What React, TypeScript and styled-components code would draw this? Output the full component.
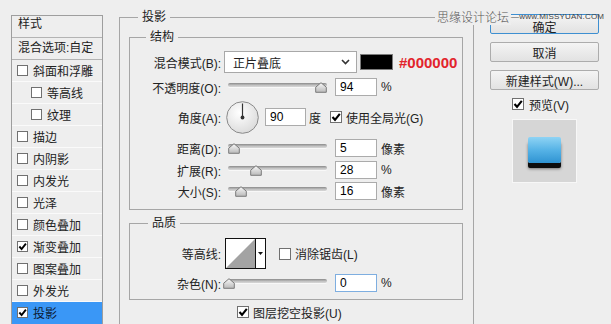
import styled, { createGlobalStyle } from "styled-components";

const GlobalStyle = createGlobalStyle`
  html, body {
    margin: 0;
    padding: 0;
  }
  body {
    background: #eeeeee;
    font-family: "Liberation Sans", "Noto Sans CJK SC", sans-serif;
    font-size: 12px;
    color: #222;
  }
`;

const Page = styled.div`
  position: relative;
  width: 611px;
  height: 324px;
  overflow: hidden;
  display: flex;
  align-items: flex-start;
`;

/* ---------- left: style list ---------- */

const StylePanel = styled.div`
  margin: 15px 0 0 11px;
  width: 92px;
  flex-shrink: 0;
  box-sizing: border-box;
  border: 1px solid #9e9e9e;
  border-bottom: none;
`;

const PanelHead = styled.div<{ $top?: boolean }>`
  height: 22px;
  box-sizing: border-box;
  padding-left: 6px;
  border-bottom: 1px solid #b3b3b3;
  line-height: ${(p) => (p.$top ? "16px" : "21px")};
  white-space: nowrap;
`;

const EffectRow = styled.div<{ $indent?: boolean; $active?: boolean }>`
  height: 22px;
  box-sizing: border-box;
  display: flex;
  align-items: center;
  gap: 5px;
  padding-left: ${(p) => (p.$indent ? 19 : 5)}px;
  border-bottom: 1px solid ${(p) => (p.$active ? "#3a97f6" : "#fafafa")};
  background: ${(p) => (p.$active ? "#3a97f6" : "transparent")};
  color: ${(p) => (p.$active ? "#0d1a33" : "#222")};
  white-space: nowrap;
`;

/* ---------- checkbox ---------- */

const Box = styled.span<{ $size: number }>`
  width: ${(p) => p.$size}px;
  height: ${(p) => p.$size}px;
  box-sizing: border-box;
  flex-shrink: 0;
  border: 1px solid #707070;
  background: #fff;
  display: inline-flex;
  align-items: center;
  justify-content: center;
`;

function CheckBox({ checked, size = 11 }: { checked?: boolean; size?: number }) {
  return (
    <Box $size={size}>
      {checked && (
        <svg width={size - 2} height={size - 2} viewBox="0 0 10 10">
          <path d="M1.5 5 L4 7.8 L8.8 1.8" stroke="#000" strokeWidth="2.1" fill="none" />
        </svg>
      )}
    </Box>
  );
}

/* ---------- centre: group boxes ---------- */

const Group = styled.fieldset`
  margin: 0;
  min-width: 0;
  box-sizing: border-box;
  border: 1px solid #a6a6a6;
`;

const OuterGroup = styled(Group)`
  margin: 9px 0 0 16px;
  width: 355px;
  height: 340px;
  flex-shrink: 0;
  padding: 0 10px 0 9px;
`;

const InnerGroup = styled(Group)<{ $mt: number; $pt: number; $pb: number }>`
  margin-top: ${(p) => p.$mt}px;
  padding: ${(p) => p.$pt}px 0 ${(p) => p.$pb}px 0;
`;

const GroupTitle = styled.legend<{ $ml: number }>`
  margin-left: ${(p) => p.$ml}px;
  padding: 0 4px;
  line-height: 16px;
  font-size: 12px;
`;

const FieldRow = styled.div<{ $h: number; $mt?: number; $pl?: number }>`
  display: flex;
  align-items: center;
  height: ${(p) => p.$h}px;
  margin-top: ${(p) => p.$mt ?? 0}px;
  padding-left: ${(p) => p.$pl ?? 0}px;
  white-space: nowrap;
`;

const FieldLabel = styled.span`
  width: 91px;
  flex-shrink: 0;
  text-align: right;
`;

const Spaced = styled.span<{ $ml: number }>`
  margin-left: ${(p) => p.$ml}px;
  display: inline-flex;
  align-items: center;
  gap: 4px;
`;

const SelectBox = styled.div`
  margin-left: 3px;
  width: 133px;
  height: 22px;
  box-sizing: border-box;
  border: 1px solid #a8a8a8;
  background: #fff;
  display: flex;
  align-items: center;
  justify-content: space-between;
  padding: 0 6px 0 8px;
`;

const Swatch = styled.div`
  margin-left: 3px;
  width: 33px;
  height: 16px;
  box-sizing: border-box;
  border: 1px solid #7c7c7c;
  background: #000;
`;

const HexText = styled.span`
  margin-left: 6px;
  font-size: 15px;
  font-weight: bold;
  color: #e2242c;
`;

const SliderWrap = styled.div`
  position: relative;
  margin-left: 7px;
  width: 99px;
  height: 18px;
  flex-shrink: 0;
`;

const Track = styled.div`
  position: absolute;
  left: 0;
  right: 0;
  top: 5px;
  height: 4px;
  border-radius: 3px;
  background: linear-gradient(#8a8a8a, #c4c4c4 60%, #d8d8d8);
  box-shadow: 0 1px 0 #f8f8f8;
`;

const Thumb = styled.svg`
  position: absolute;
  top: 4px;
  margin-left: -6px;
`;

function Slider({ at }: { at: number }) {
  return (
    <SliderWrap>
      <Track />
      <Thumb width="12" height="11" viewBox="0 0 12 11" style={{ left: at }}>
        <defs>
          <linearGradient id="thumbFill" x1="0" y1="0" x2="0" y2="1">
            <stop offset="0" stopColor="#fafafa" />
            <stop offset="1" stopColor="#b9b9b9" />
          </linearGradient>
        </defs>
        <path
          d="M6 0.7 L11.3 5.2 L11.3 10.3 L0.7 10.3 L0.7 5.2 Z"
          fill="url(#thumbFill)"
          stroke="#7b7b7b"
          strokeWidth="1"
        />
      </Thumb>
    </SliderWrap>
  );
}

const NumInput = styled.input<{ $focus?: boolean; $w?: number; $ml?: number }>`
  margin: 0 0 0 ${(p) => p.$ml ?? 8}px;
  width: ${(p) => p.$w ?? 42}px;
  height: 18px;
  box-sizing: border-box;
  padding: 0 4px;
  border: 1px solid ${(p) => (p.$focus ? "#7eaee0" : "#ababab")};
  background: #fff;
  font: 12px "Liberation Sans", sans-serif;
  color: #000;
  outline: none;
`;

const Unit = styled.span<{ $ml?: number }>`
  margin-left: ${(p) => p.$ml ?? 4}px;
`;

const Dial = styled.svg`
  margin-left: 5px;
  flex-shrink: 0;
`;

const ContourBox = styled.div`
  margin-left: 4px;
  width: 41px;
  height: 31px;
  box-sizing: border-box;
  border: 1px solid #111;
  background: #fff;
  display: flex;
`;

const ContourPreview = styled.svg`
  flex-shrink: 0;
  border-right: 1px solid #111;
`;

const ContourArrow = styled.div`
  flex: 1;
  display: flex;
  align-items: center;
  justify-content: center;
`;

/* ---------- right: buttons and preview ---------- */

const SideColumn = styled.div`
  margin: 14px 0 0 16px;
  width: 109px;
  flex-shrink: 0;
  display: flex;
  flex-direction: column;
  gap: 8px;
`;

const DialogButton = styled.button<{ $primary?: boolean }>`
  height: 20px;
  padding: ${(p) => (p.$primary ? "3px 0 0" : "0")};
  line-height: 14px;
  border: 1px solid ${(p) => (p.$primary ? "#3d8fd1" : "#acacac")};
  border-radius: 2px;
  background: linear-gradient(#f4f4f4, #e2e2e2);
  font: 12px "Liberation Sans", "Noto Sans CJK SC", sans-serif;
  color: #222;
`;

const PreviewCheck = styled.div`
  height: 12px;
  padding-left: 22px;
  display: flex;
  align-items: center;
  gap: 5px;
`;

const PreviewBox = styled.div`
  margin: 1px 0 0 22px;
  width: 65px;
  height: 64px;
  box-sizing: border-box;
  border: 1px solid #f7f7f7;
  background: #d6d6d6;
  display: flex;
  align-items: center;
  justify-content: center;
`;

const PreviewSquare = styled.div`
  width: 33px;
  height: 26px;
  margin-top: -3px;
  border-radius: 2px;
  background: linear-gradient(#8fd3f4, #56b3e6 50%, #2f93d2);
  box-shadow: 0 5px 0 #0d0d0d, 0 6px 3px rgba(0, 0, 0, 0.45);
`;

/* ---------- watermark over the top edge ---------- */

const Watermark = styled.div`
  position: absolute;
  left: 435px;
  top: 8px;
  display: flex;
  align-items: center;
  line-height: 14px;
  color: #555;
  white-space: nowrap;
`;

const WatermarkName = styled.span`
  background: #eeeeee;
  padding: 0 2px;
  font: 12px "Noto Sans CJK SC", sans-serif;
  font-weight: 300;
`;

const WatermarkUrl = styled.span`
  font: 8px "Liberation Sans", sans-serif;
  line-height: 9px;
  color: #444;
  letter-spacing: 0.2px;
`;

const effects = [
  { name: "斜面和浮雕" },
  { name: "等高线", indent: true },
  { name: "纹理", indent: true },
  { name: "描边" },
  { name: "内阴影" },
  { name: "内发光" },
  { name: "光泽" },
  { name: "颜色叠加" },
  { name: "渐变叠加", checked: true },
  { name: "图案叠加" },
  { name: "外发光" },
  { name: "投影", checked: true, active: true },
];

export default function App() {
  return (
    <Page>
      <GlobalStyle />

      <StylePanel>
        <PanelHead $top>样式</PanelHead>
        <PanelHead>混合选项:自定</PanelHead>
        {effects.map((e) => (
          <EffectRow key={e.name} $indent={e.indent} $active={e.active}>
            <CheckBox checked={e.checked} />
            {e.name}
          </EffectRow>
        ))}
      </StylePanel>

      <OuterGroup>
        <GroupTitle $ml={9}>投影</GroupTitle>

        <InnerGroup $mt={4} $pt={6} $pb={9}>
          <GroupTitle $ml={16}>结构</GroupTitle>
          <FieldRow $h={22}>
            <FieldLabel>混合模式(B):</FieldLabel>
            <SelectBox>
              正片叠底
              <svg width="9" height="6" viewBox="0 0 9 6">
                <path d="M1 1 L4.5 4.5 L8 1" stroke="#333" strokeWidth="1.6" fill="none" />
              </svg>
            </SelectBox>
            <Swatch />
            <HexText>#000000</HexText>
          </FieldRow>
          <FieldRow $h={18} $mt={5}>
            <FieldLabel>不透明度(O):</FieldLabel>
            <Slider at={93} />
            <NumInput defaultValue="94" readOnly />
            <Unit>%</Unit>
          </FieldRow>
          <FieldRow $h={32} $mt={5}>
            <FieldLabel>角度(A):</FieldLabel>
            <Dial width="33" height="33" viewBox="0 0 33 33">
              <defs>
                <radialGradient id="dialFill" cx="0.4" cy="0.35" r="0.7">
                  <stop offset="0" stopColor="#ffffff" />
                  <stop offset="1" stopColor="#dadada" />
                </radialGradient>
              </defs>
              <circle cx="16.5" cy="16.5" r="15.8" fill="url(#dialFill)" stroke="#8a8a8a" />
              <line x1="16.5" y1="16.5" x2="16.5" y2="2.5" stroke="#333" strokeWidth="1.2" />
              <circle cx="16.5" cy="16.5" r="1.9" fill="#333" />
            </Dial>
            <NumInput defaultValue="90" readOnly $w={41} $ml={6} />
            <Unit $ml={3}>度</Unit>
            <Spaced $ml={9}>
              <CheckBox checked size={12} />
              使用全局光(G)
            </Spaced>
          </FieldRow>
          <FieldRow $h={18} $mt={6}>
            <FieldLabel>距离(D):</FieldLabel>
            <Slider at={5.5} />
            <NumInput defaultValue="5" readOnly />
            <Unit>像素</Unit>
          </FieldRow>
          <FieldRow $h={18} $mt={4}>
            <FieldLabel>扩展(R):</FieldLabel>
            <Slider at={27.5} />
            <NumInput defaultValue="28" readOnly />
            <Unit>%</Unit>
          </FieldRow>
          <FieldRow $h={18} $mt={3}>
            <FieldLabel>大小(S):</FieldLabel>
            <Slider at={12.5} />
            <NumInput defaultValue="16" readOnly />
            <Unit>像素</Unit>
          </FieldRow>
        </InnerGroup>

        <InnerGroup $mt={5} $pt={7} $pb={7}>
          <GroupTitle $ml={18}>品质</GroupTitle>
          <FieldRow $h={31}>
            <FieldLabel>等高线:</FieldLabel>
            <ContourBox>
              <ContourPreview width="29" height="29" viewBox="0 0 29 29">
                <path d="M0 29 L29 0 L29 29 Z" fill="#a3a3a3" />
              </ContourPreview>
              <ContourArrow>
                <svg width="5" height="3" viewBox="0 0 5 3">
                  <path d="M0 0 L5 0 L2.5 3 Z" fill="#111" />
                </svg>
              </ContourArrow>
            </ContourBox>
            <Spaced $ml={13}>
              <CheckBox size={12} />
              消除锯齿(L)
            </Spaced>
          </FieldRow>
          <FieldRow $h={18} $mt={5}>
            <FieldLabel>杂色(N):</FieldLabel>
            <Slider at={0.5} />
            <NumInput defaultValue="0" readOnly $focus />
            <Unit>%</Unit>
          </FieldRow>
        </InnerGroup>

        <FieldRow $h={14} $mt={5} $pl={108}>
          <Spaced $ml={0}>
            <CheckBox checked size={12} />
            图层挖空投影(U)
          </Spaced>
        </FieldRow>
      </OuterGroup>

      <SideColumn>
        <DialogButton $primary>确定</DialogButton>
        <DialogButton>取消</DialogButton>
        <DialogButton>新建样式(W)...</DialogButton>
        <PreviewCheck>
          <CheckBox checked size={12} />
          预览(V)
        </PreviewCheck>
        <PreviewBox>
          <PreviewSquare />
        </PreviewBox>
      </SideColumn>

      <Watermark>
        <WatermarkName>思缘设计论坛</WatermarkName>
        <WatermarkUrl>—www.MISSYUAN.COM</WatermarkUrl>
      </Watermark>
    </Page>
  );
}
